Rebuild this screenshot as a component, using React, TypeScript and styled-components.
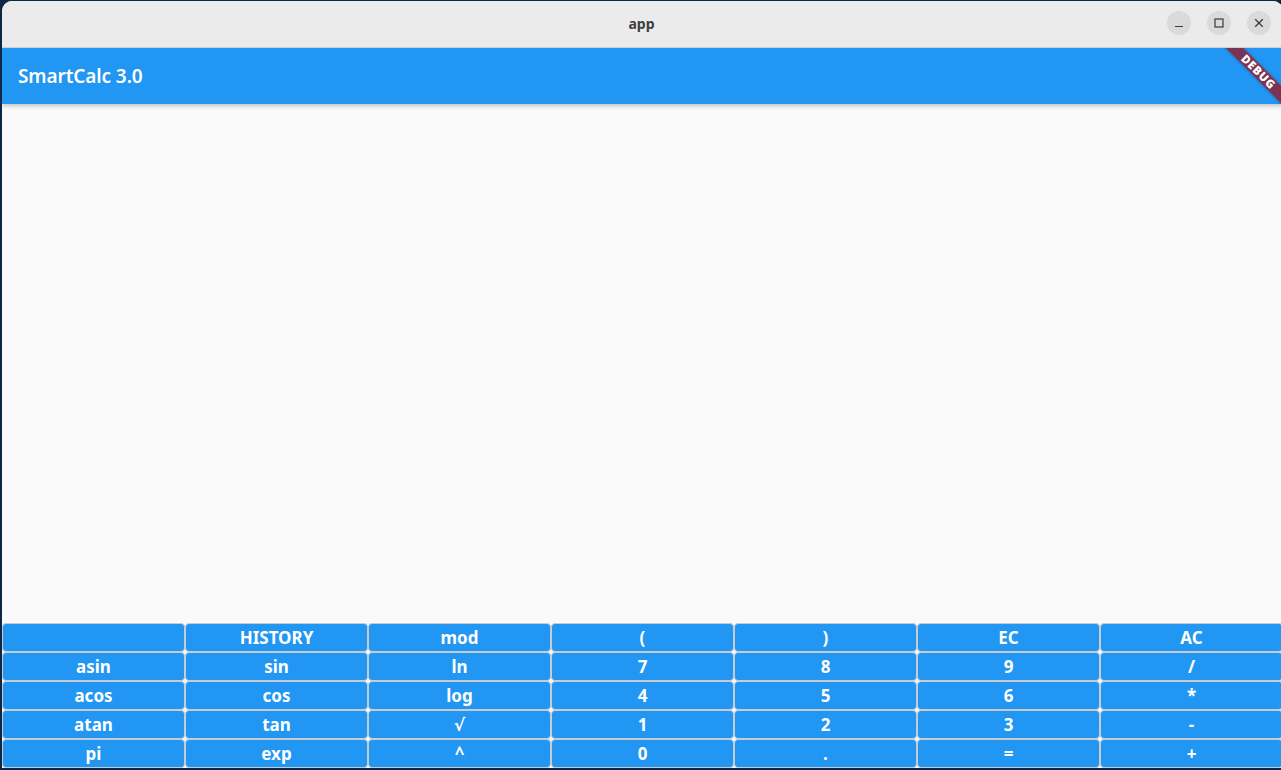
import React from "react";
import styled, { createGlobalStyle } from "styled-components";

const GlobalStyle = createGlobalStyle`
  html, body { margin: 0; padding: 0; }
  body {
    background: #0f2746;
    font-family: "Noto Sans", "DejaVu Sans", sans-serif;
    overflow: hidden;
  }
`;

const Desktop = styled.div`
  width: 1281px;
  height: 770px;
  box-sizing: border-box;
  padding: 1px 0 2px 2px;
  display: flex;
  overflow: hidden;
  background: #0f2746;
`;

const Window = styled.div`
  width: 1281px;
  flex: none;
  display: flex;
  flex-direction: column;
  border-radius: 10px 10px 0 0;
  overflow: hidden;
  background: #fafafa;
`;

const TitleBar = styled.div`
  height: 46px;
  flex: none;
  display: flex;
  align-items: center;
  justify-content: center;
  position: relative;
  background: #ebebeb;
  border-bottom: 1px solid #d6d6d6;
`;

const TitleText = styled.span`
  font-size: 14px;
  font-weight: 700;
  color: #3d3d3d;
  margin-right: 2px;
  margin-top: -2px;
`;

const Controls = styled.div`
  position: absolute;
  right: 12px;
  top: 10px;
  display: flex;
  gap: 16px;
`;

const CtrlBtn = styled.div`
  width: 24px;
  height: 24px;
  border-radius: 50%;
  background: #dadada;
  display: flex;
  align-items: center;
  justify-content: center;
`;

const AppBar = styled.div`
  height: 56px;
  flex: none;
  display: flex;
  align-items: center;
  padding-left: 16px;
  background: #2196f3;
  position: relative;
  z-index: 2;
  box-shadow: 0 2px 4px rgba(0, 0, 0, 0.22);
`;

const AppTitle = styled.h1`
  margin: 0;
  font-size: 19px;
  font-weight: 600;
  color: #ffffff;
  letter-spacing: -0.1px;
`;

const Banner = styled.svg`
  position: absolute;
  right: 2px;
  top: 0;
`;

const Display = styled.div`
  flex: 1;
  background: #fafafa;
`;

const Keypad = styled.div`
  flex: none;
  display: grid;
  grid-template-columns: repeat(7, 1fr);
  grid-auto-rows: 29px;
  background: #fafafa;
`;

const Key = styled.button`
  margin: 0;
  padding: 0;
  border: 1px solid #c6ccd2;
  border-radius: 4px;
  background: #2196f3;
  color: #ffffff;
  font-family: "Noto Sans", "DejaVu Sans", sans-serif;
  font-size: 17px;
  font-weight: 700;
  line-height: 1;
  display: flex;
  align-items: center;
  justify-content: center;
  cursor: pointer;
`;

const rows: string[][] = [
  ["", "HISTORY", "mod", "(", ")", "EC", "AC"],
  ["asin", "sin", "ln", "7", "8", "9", "/"],
  ["acos", "cos", "log", "4", "5", "6", "*"],
  ["atan", "tan", "√", "1", "2", "3", "-"],
  ["pi", "exp", "^", "0", ".", "=", "+"],
];

export default function App() {
  return (
    <>
      <GlobalStyle />
      <Desktop>
        <Window>
          <TitleBar>
            <TitleText>app</TitleText>
            <Controls>
              <CtrlBtn>
                <svg width="10" height="10" viewBox="0 0 10 10">
                  <line x1="1" y1="8.5" x2="9" y2="8.5" stroke="#3a3a3a" strokeWidth="1.2" />
                </svg>
              </CtrlBtn>
              <CtrlBtn>
                <svg width="10" height="10" viewBox="0 0 10 10">
                  <rect x="1" y="1" width="8" height="8" fill="none" stroke="#3a3a3a" strokeWidth="1.2" />
                </svg>
              </CtrlBtn>
              <CtrlBtn>
                <svg width="10" height="10" viewBox="0 0 10 10">
                  <path d="M1.2 1.2 L8.8 8.8 M8.8 1.2 L1.2 8.8" stroke="#3a3a3a" strokeWidth="1.3" />
                </svg>
              </CtrlBtn>
            </Controls>
          </TitleBar>
          <AppBar>
            <AppTitle>SmartCalc 3.0</AppTitle>
            <Banner width="60" height="56" viewBox="0 0 60 56">
              <defs>
                <filter id="bshadow" x="-20%" y="-50%" width="140%" height="200%">
                  <feDropShadow dx="0" dy="0" stdDeviation="1.5" floodColor="#000" floodOpacity="0.35" />
                </filter>
              </defs>
              <g transform="translate(37 23.5) rotate(45)">
                <rect x="-60" y="-6.2" width="120" height="12.4" fill="#7c3352" filter="url(#bshadow)" />
                <text
                  x="0.5"
                  y="4"
                  textAnchor="middle"
                  fontSize="11.5"
                  fontWeight="900"
                  fill="#ffffff"
                  fontFamily="Noto Sans, DejaVu Sans, sans-serif"
                  letterSpacing="0.7"
                >
                  DEBUG
                </text>
              </g>
            </Banner>
          </AppBar>
          <Display />
          <Keypad>
            {rows.flat().map((label, i) => (
              <Key key={i}>{label}</Key>
            ))}
          </Keypad>
        </Window>
      </Desktop>
    </>
  );
}
